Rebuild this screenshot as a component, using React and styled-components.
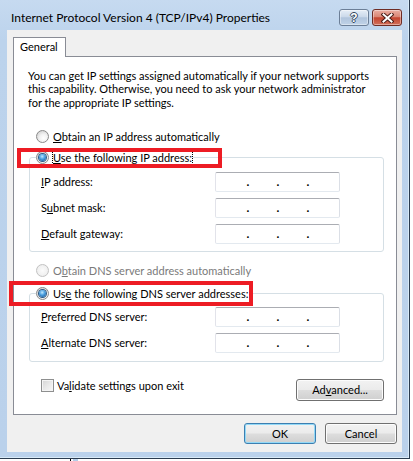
import React from 'react';
import styled, { createGlobalStyle } from 'styled-components';

const FONT = `Lato, "Liberation Sans", sans-serif`;

const GlobalStyle = createGlobalStyle`
  html, body {
    margin: 0;
    padding: 0;
    background: #fff;
  }
  body {
    font-family: ${FONT};
    font-size: 11px;
    color: #000;
  }
  * {
    box-sizing: border-box;
  }
`;

function App() {
  return (
    <>
      <GlobalStyle />
      <Window>
        <TitleBar>
          <Title>Internet Protocol Version 4 (TCP/IPv4) Properties</Title>
          <CaptionButton>
            <HelpGlyph>?</HelpGlyph>
          </CaptionButton>
          <CaptionButton $close>
            <svg width="13" height="10" viewBox="0 0 13 10">
              <path d="M2.5 1.5 L10.5 8.5 M10.5 1.5 L2.5 8.5" stroke="#4b1d17" strokeWidth="4" strokeLinecap="square" />
              <path d="M2.5 1.5 L10.5 8.5 M10.5 1.5 L2.5 8.5" stroke="#fff" strokeWidth="2" strokeLinecap="square" />
            </svg>
          </CaptionButton>
        </TitleBar>

        <Client>
          <TabStrip>
            <Tab>General</Tab>
          </TabStrip>
          <Panel>
            <Intro>
              You can get IP settings assigned automatically if your network supports<br />
              this capability. Otherwise, you need to ask your network administrator<br />
              for the appropriate IP settings.
            </Intro>

            <RadioRow $top={20}>
              <Radio />
              <RadioText><Key>O</Key>btain an IP address automatically</RadioText>
            </RadioRow>

            <Group $top={5}>
              <Legend>
                <Radio $checked />
                <RadioText $focused><Key>U</Key>se the following IP address:</RadioText>
                <RedBox $left={-19} $top={-2} $w={205} $h={20} />
              </Legend>
              <Rows $top={6} $bottom={7}>
                <FieldRow>
                  <FieldLabel><Key>I</Key>P address:</FieldLabel>
                  <IpBox />
                </FieldRow>
                <FieldRow>
                  <FieldLabel>S<Key>u</Key>bnet mask:</FieldLabel>
                  <IpBox />
                </FieldRow>
                <FieldRow>
                  <FieldLabel><Key>D</Key>efault gateway:</FieldLabel>
                  <IpBox />
                </FieldRow>
              </Rows>
            </Group>

            <RadioRow $top={11}>
              <Radio $disabled />
              <RadioText $disabled>O<Key>b</Key>tain DNS server address automatically</RadioText>
            </RadioRow>

            <Group $top={7}>
              <Legend>
                <Radio $checked />
                <RadioText>Us<Key>e</Key> the following DNS server addresses:</RadioText>
                <RedBox $left={-27} $top={-5} $w={244} $h={25} />
              </Legend>
              <Rows $top={5} $bottom={8}>
                <FieldRow>
                  <FieldLabel><Key>P</Key>referred DNS server:</FieldLabel>
                  <IpBox />
                </FieldRow>
                <FieldRow>
                  <FieldLabel><Key>A</Key>lternate DNS server:</FieldLabel>
                  <IpBox />
                </FieldRow>
              </Rows>
            </Group>

            <Footer>
              <CheckLabel>
                <CheckBox />
                <CheckText>Va<Key>l</Key>idate settings upon exit</CheckText>
              </CheckLabel>
              <Button $w={88} $h={22}>Ad<Key>v</Key>anced...</Button>
            </Footer>
          </Panel>

          <ButtonRow>
            <Button $w={72} $h={21} $default>OK</Button>
            <Button $w={72} $h={21}>Cancel</Button>
          </ButtonRow>
        </Client>
      </Window>
      <BehindEdge>
        <EdgeLine />
        <EdgeBlue />
      </BehindEdge>
    </>
  );
}

function IpBox() {
  return (
    <IpField>
      <Dot>.</Dot>
      <Dot>.</Dot>
      <Dot>.</Dot>
    </IpField>
  );
}

const Window = styled.div`
  width: 410px;
  height: 459px;
  display: flex;
  flex-direction: column;
  padding: 0 7px 6px;
  background: linear-gradient(180deg, #c6daf0 0px, #bcd3ec 40px, #bad1eb 100%);
  border-right: 1px solid #2b3c50;
  border-bottom: 1px solid #2b3c50;
  box-shadow: inset -1px -1px 0 #d8eaf8;
`;

const TitleBar = styled.div`
  height: 30px;
  flex: none;
  display: flex;
  align-items: flex-start;
  padding: 9px 0 0 4px;
`;

const Title = styled.div`
  flex: 1;
  font-size: 12px;
  line-height: 17px;
  white-space: nowrap;
`;

const CaptionButton = styled.div`
  width: 30px;
  height: 17px;
  margin-left: ${(p) => (p.$close ? '3px' : '0')};
  border: 1px solid ${(p) => (p.$close ? '#6e2c24' : '#6c7f97')};
  border-radius: 3px;
  background: ${(p) =>
    p.$close
      ? 'linear-gradient(180deg, #eaaea2 0%, #da8675 45%, #c4442f 52%, #d1705a 100%)'
      : 'linear-gradient(180deg, #e6eef7 0%, #cbd9ea 45%, #b0c4dc 52%, #c0d3e8 100%)'};
  box-shadow: inset 0 0 0 1px rgba(255, 255, 255, 0.4);
  display: flex;
  align-items: center;
  justify-content: center;
`;

const HelpGlyph = styled.span`
  font-family: "Liberation Sans", sans-serif;
  font-weight: 700;
  font-size: 12px;
  line-height: 12px;
  color: #fff;
  text-shadow: 1px 0 #34465c, -1px 0 #34465c, 0 1px #34465c, 0 -1px #34465c;
`;

const Client = styled.div`
  height: 422px;
  flex: none;
  background: #f0f0f0;
  display: flex;
  flex-direction: column;
  padding: 7px 5px 0 6px;
`;

const TabStrip = styled.div`
  height: 19px;
  display: flex;
  position: relative;
  z-index: 1;
`;

const Tab = styled.div`
  width: 53px;
  height: 20px;
  background: #fff;
  border: 1px solid #898c95;
  border-bottom: none;
  padding-left: 6px;
  line-height: 17px;
`;

const Panel = styled.div`
  background: #fff;
  border: 1px solid #898c95;
  padding: 12px 12px 13px 14px;
  display: flex;
  flex-direction: column;
`;

const Intro = styled.p`
  margin: 0;
  line-height: 13.33px;
  white-space: nowrap;
`;

const RadioRow = styled.div`
  display: flex;
  align-items: center;
  height: 16px;
  margin: ${(p) => p.$top}px 0 0 8px;
`;

const Radio = styled.span`
  width: 13px;
  height: 13px;
  flex: none;
  border-radius: 50%;
  border: 1px solid ${(p) => (p.$disabled ? '#c2c2c2' : '#8a8a8a')};
  background: ${(p) =>
    p.$disabled
      ? 'radial-gradient(circle at 50% 50%, #fbfbfb 0%, #f1f1f1 60%, #e4e4e4 100%)'
      : 'radial-gradient(circle at 60% 65%, #ffffff 0%, #f2f2f2 40%, #d4d4d4 80%, #c2c2c2 100%)'};
  display: flex;
  align-items: center;
  justify-content: center;

  &::after {
    content: '';
    display: ${(p) => (p.$checked ? 'block' : 'none')};
    width: 7px;
    height: 7px;
    border-radius: 50%;
    background: radial-gradient(circle at 45% 35%, #c4e8fc 0%, #53a6e4 40%, #1a5fa0 85%, #103f70 100%);
    box-shadow: 0 0 0 1px #2c5a85;
  }
`;

const RadioText = styled.span`
  margin-left: 4px;
  line-height: 13px;
  white-space: nowrap;
  color: ${(p) => (p.$disabled ? '#7a7a7a' : '#000')};
  outline: ${(p) => (p.$focused ? '1px dotted #000' : 'none')};
`;

const Key = styled.span`
  text-decoration: underline;
`;

const Group = styled.fieldset`
  margin: ${(p) => p.$top}px 0 0 1px;
  padding: 0;
  min-width: 0;
  border: 1px solid #d5dfe5;
  border-radius: 3px;
`;

const Legend = styled.legend`
  position: relative;
  display: flex;
  align-items: center;
  height: 16px;
  margin-left: 6px;
  padding: 0 1px 0 0;
`;

const RedBox = styled.span`
  position: absolute;
  left: ${(p) => p.$left}px;
  top: ${(p) => p.$top}px;
  width: ${(p) => p.$w}px;
  height: ${(p) => p.$h}px;
  border: 4px solid #ed1c24;
  pointer-events: none;
`;

const Rows = styled.div`
  display: flex;
  flex-direction: column;
  gap: 6px;
  padding: ${(p) => p.$top}px 0 ${(p) => p.$bottom}px 11px;
`;

const FieldRow = styled.div`
  display: flex;
  align-items: center;
  height: 20px;
`;

const FieldLabel = styled.span`
  width: 174px;
  flex: none;
  white-space: nowrap;
`;

const IpField = styled.div`
  width: 125px;
  height: 20px;
  display: flex;
  padding-left: 30px;
  border: 1px solid;
  border-color: #abadb3 #dbdfe6 #e3e9ef #e2e3ea;
  border-radius: 2px;
  background: #fff;
  line-height: 17px;
`;

const Dot = styled.span`
  width: 4px;
  margin-right: 26px;
  text-align: center;
  font-weight: 700;
  font-size: 12px;
`;

const Footer = styled.div`
  display: flex;
  justify-content: space-between;
  align-items: flex-start;
  margin: 17px 0 0 13px;
`;

const CheckLabel = styled.label`
  display: flex;
  align-items: center;
  gap: 3px;
  height: 16px;
  margin-top: -1px;
`;

const CheckText = styled.span`
  white-space: nowrap;
`;

const CheckBox = styled.span`
  width: 13px;
  height: 13px;
  flex: none;
  border: 1px solid #8e8f8f;
  background: linear-gradient(135deg, #d4d4d4 0%, #e8e8e8 50%, #f8f8f8 100%);
  box-shadow: inset 0 0 0 1px #f4f4f4;
`;

const Button = styled.button`
  width: ${(p) => p.$w}px;
  height: ${(p) => p.$h}px;
  padding: 0;
  font: inherit;
  color: #000;
  border: 1px solid ${(p) => (p.$default ? '#3c7fb1' : '#707070')};
  border-radius: 3px;
  background: linear-gradient(180deg, #f2f2f2 0%, #ebebeb 48%, #dddddd 52%, #cfcfcf 100%);
  box-shadow: inset 0 0 0 1px ${(p) => (p.$default ? '#93d9f7' : '#fcfcfc')};
  display: flex;
  align-items: center;
  justify-content: center;
`;

const ButtonRow = styled.div`
  display: flex;
  justify-content: flex-end;
  gap: 9px;
  margin-top: 8px;
`;

const BehindEdge = styled.div`
  display: flex;
  height: 2px;
  padding-left: 70px;
  gap: 2px;
`;

const EdgeLine = styled.span`
  width: 1px;
  background: #000;
`;

const EdgeBlue = styled.span`
  width: 5px;
  background: #b4cde9;
`;

export default App;
